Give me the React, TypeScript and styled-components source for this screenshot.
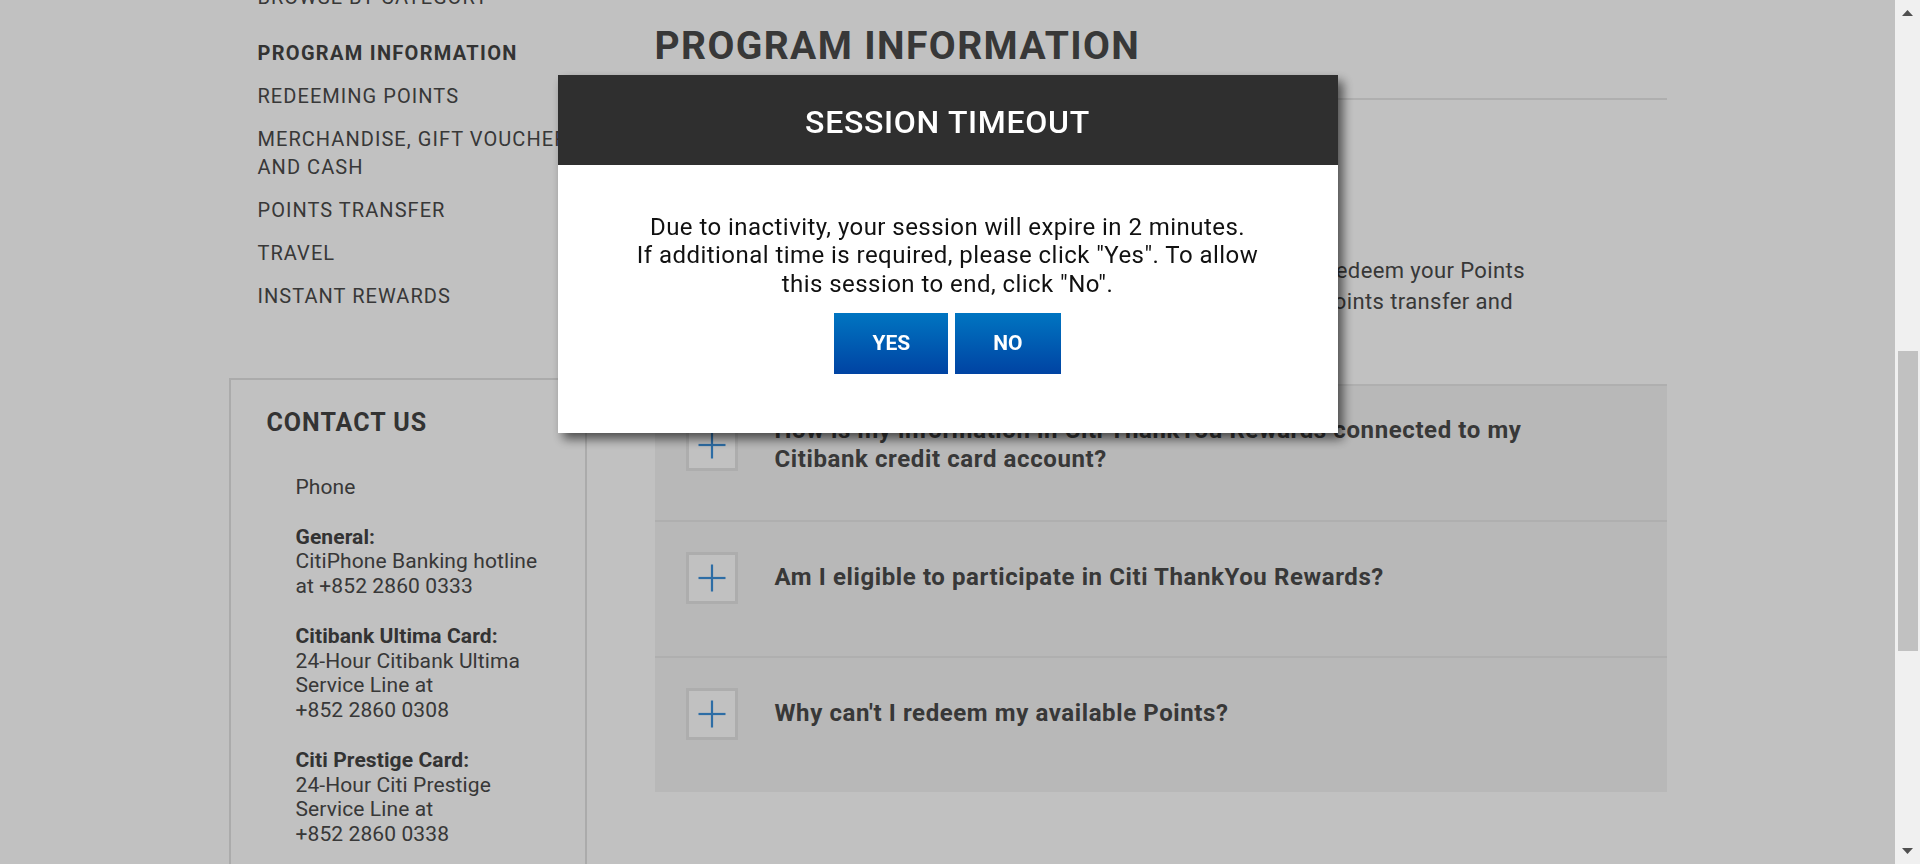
import { useLayoutEffect, useRef } from 'react';
import styled, { createGlobalStyle } from 'styled-components';

const GlobalStyle = createGlobalStyle`
	html, body {
		margin: 0;
		padding: 0;
		overflow: hidden;
	}
	* {
		box-sizing: border-box;
	}
	#root {
		height: 100vh;
	}
`;

const FONT = `Roboto, "Liberation Sans", Arial, sans-serif`;

const navItems = [
	{ label: ['PROGRAM INFORMATION'], active: true },
	{ label: ['REDEEMING POINTS'] },
	{ label: ['MERCHANDISE, GIFT VOUCHERS', 'AND CASH'] },
	{ label: ['POINTS TRANSFER'] },
	{ label: ['TRAVEL'] },
	{ label: ['INSTANT REWARDS'] },
];

const contacts = [
	{ title: 'General:', text: 'CitiPhone Banking hotline at', phone: '+852 2860 0333' },
	{ title: 'Citibank Ultima Card:', text: '24-Hour Citibank Ultima Service Line at', phone: '+852 2860 0308' },
	{ title: 'Citi Prestige Card:', text: '24-Hour Citi Prestige Service Line at', phone: '+852 2860 0338' },
	{ title: 'Citi Premier Card:', text: '24-Hour Citi Premier Service Line at', phone: '+852 2860 0360' },
];

const faqs = [
	'How is my information in Citi ThankYou Rewards connected to my Citibank credit card account?',
	'Am I eligible to participate in Citi ThankYou Rewards?',
	"Why can't I redeem my available Points?",
];

function ToggleIcon({ open }: { open?: boolean }) {
	return (
		<ToggleBox>
			<svg width="28" height="28" viewBox="0 0 28 28">
				<path d="M0.5 14H27.5" stroke="#3c90da" strokeWidth="2.2" />
				{!open && <path d="M14 0.5V27.5" stroke="#3c90da" strokeWidth="2.2" />}
			</svg>
		</ToggleBox>
	);
}

function App() {
	const scrollerRef = useRef<HTMLDivElement>(null);
	const accordionRef = useRef<HTMLDivElement>(null);

	// page is shown scrolled so the accordion top sits at y=98
	useLayoutEffect(() => {
		const scroller = scrollerRef.current;
		const acc = accordionRef.current;
		if (!scroller || !acc) return;
		const offset = acc.getBoundingClientRect().top - scroller.getBoundingClientRect().top + scroller.scrollTop;
		scroller.scrollTop = offset - 98;
	}, []);

	return (
		<>
			<GlobalStyle />
			<Viewport>
				<Frame>
					<Scroller ref={scrollerRef}>
						<Page>
							<Masthead>
								<Logo>citi</Logo>
								<HeroTitle>Citi ThankYou Rewards</HeroTitle>
							</Masthead>
							<Container>
								<Sidebar>
									<NavHeading>BROWSE BY CATEGORY</NavHeading>
									<NavList>
										{navItems.map((item) => (
											<NavItem key={item.label[0]} $active={item.active}>
												{item.label.map((line) => (
													<span key={line}>{line}</span>
												))}
											</NavItem>
										))}
									</NavList>

									<ContactBox>
										<ContactTitle>CONTACT US</ContactTitle>
										<ContactList>
											<ContactEntry>Phone</ContactEntry>
											{contacts.map((c) => (
												<ContactEntry key={c.title}>
													<strong>{c.title}</strong>
													<br />
													{c.text} <Nowrap>{c.phone}</Nowrap>
												</ContactEntry>
											))}
										</ContactList>
									</ContactBox>
								</Sidebar>

								<Main>
									<PageTitle>PROGRAM INFORMATION</PageTitle>
									<Accordion ref={accordionRef}>
										<AccItem $open>
											<AccHeader>
												<ToggleIcon open />
												<Question>What is Citi ThankYou Rewards?</Question>
											</AccHeader>
											<Answer>
												Citi ThankYou Rewards lets you earn Points easily and redeem your Points
												<br />
												for merchandise, gift vouchers, cash, instant rewards, points transfer and
												<br />
												travel.
											</Answer>
										</AccItem>
										{faqs.map((q) => (
											<AccItem key={q}>
												<AccHeader>
													<ToggleIcon />
													<Question>{q}</Question>
												</AccHeader>
											</AccItem>
										))}
									</Accordion>
								</Main>
							</Container>
							<Footer />
						</Page>
					</Scroller>

					<Backdrop>
						<Dialog role="dialog" aria-modal="true">
							<DialogHeader>SESSION TIMEOUT</DialogHeader>
							<DialogBody>
								<Message>
									Due to inactivity, your session will expire in 2 minutes.
									<br />
									If additional time is required, please click "Yes". To allow
									<br />
									this session to end, click "No".
								</Message>
								<ButtonRow>
									<DialogButton>YES</DialogButton>
									<DialogButton>NO</DialogButton>
								</ButtonRow>
							</DialogBody>
						</Dialog>
					</Backdrop>
				</Frame>

				<ScrollTrack>
					<ArrowButton>
						<svg width="25" height="25" viewBox="0 0 25 25">
							<polygon points="7,16 18,16 12.5,10" fill="#505050" />
						</svg>
					</ArrowButton>
					<TrackBody>
						<Thumb $top={326} $height={300} />
					</TrackBody>
					<ArrowButton>
						<svg width="25" height="25" viewBox="0 0 25 25">
							<polygon points="7,9 18,9 12.5,15" fill="#505050" />
						</svg>
					</ArrowButton>
				</ScrollTrack>
			</Viewport>
		</>
	);
}

export default App;

const Viewport = styled.div`
	display: flex;
	width: 100vw;
	height: 100vh;
	overflow: hidden;
	background: #fff;
`;

const Frame = styled.div`
	position: relative;
	flex: 1;
	min-width: 0;
	height: 100%;
`;

const Scroller = styled.div`
	height: 100%;
	overflow-y: auto;
	scrollbar-width: none;
	&::-webkit-scrollbar {
		display: none;
	}
`;

const Page = styled.div`
	font-family: ${FONT};
	color: #4a4a4a;
	background: #fff;
`;

const Masthead = styled.header`
	display: flex;
	flex-direction: column;
	justify-content: space-between;
	height: 380px;
	padding: 24px 228px 48px;
	background: linear-gradient(90deg, #0c2340, #1c4f8c);
	color: #fff;
`;

const Logo = styled.div`
	font-size: 40px;
	font-weight: 700;
`;

const HeroTitle = styled.h2`
	margin: 0;
	font-size: 44px;
	font-weight: 500;
`;

const Container = styled.div`
	width: 1438px;
	margin: 0 auto;
	display: grid;
	grid-template-columns: 358px 1012px;
	column-gap: 68px;
	padding: 40px 0 120px;
`;

const Sidebar = styled.aside`
	display: flex;
	flex-direction: column;
`;

const NavHeading = styled.div`
	padding-left: 29px;
	font-size: 20px;
	line-height: 24px;
	letter-spacing: 1px;
	color: #4a4a4a;
`;

const NavList = styled.ul`
	list-style: none;
	margin: 30px 0 0;
	padding: 0 0 0 29px;
	display: flex;
	flex-direction: column;
	gap: 15px;
`;

const NavItem = styled.li<{ $active?: boolean }>`
	display: flex;
	flex-direction: column;
	font-size: 20px;
	line-height: 28px;
	letter-spacing: ${({ $active }) => ($active ? '1.3px' : '1.05px')};
	font-weight: ${({ $active }) => ($active ? 700 : 400)};
	color: ${({ $active }) => ($active ? '#444' : '#4a4a4a')};
	white-space: nowrap;
`;

const ContactBox = styled.section`
	margin-top: 68px;
	border: 2px solid #e2e2e2;
	padding: 29px 38px 40px 36px;
`;

const ContactTitle = styled.h3`
	margin: 0;
	font-size: 25px;
	line-height: 28px;
	font-weight: 700;
	letter-spacing: 1px;
	color: #444;
`;

const ContactList = styled.div`
	margin-top: 38px;
	padding-left: 29px;
`;

const ContactEntry = styled.p`
	margin: 0 0 24.8px;
	font-size: 21px;
	line-height: 24.8px;
	letter-spacing: 0.1px;
	color: #4a4a4a;

	strong {
		font-weight: 700;
		color: #444;
	}
`;

const Nowrap = styled.span`
	white-space: nowrap;
`;

const Main = styled.main`
	display: flex;
	flex-direction: column;
`;

const PageTitle = styled.h1`
	margin: 38px 0 0;
	font-size: 39px;
	line-height: 46px;
	font-weight: 700;
	letter-spacing: 1.4px;
	color: #4a4a4a;
`;

const Accordion = styled.div`
	margin-top: 29px;
	display: flex;
	flex-direction: column;
`;

const AccItem = styled.div<{ $open?: boolean }>`
	display: flex;
	flex-direction: column;
	min-height: 136px;
	padding: 30px 40px 36px 31px;
	border-top: 2px solid #e7e7e7;
	background: ${({ $open }) => ($open ? '#fff' : '#f3f3f3')};
`;

const AccHeader = styled.div`
	display: flex;
	align-items: center;
	gap: 37px;
`;

const ToggleBox = styled.div`
	flex: none;
	display: flex;
	align-items: center;
	justify-content: center;
	width: 52px;
	height: 52px;
	border: 3px solid #e5e5e5;
	background: #fff;
`;

const Question = styled.h4`
	margin: 0;
	max-width: 790px;
	font-size: 24px;
	line-height: 29.5px;
	font-weight: 700;
	letter-spacing: 0.6px;
	color: #4a4a4a;
`;

const Answer = styled.p`
	margin: 74px 0 0;
	padding-left: 89px;
	font-size: 22px;
	line-height: 30.5px;
	letter-spacing: 0.4px;
	color: #4a4a4a;
	white-space: nowrap;
`;

const Footer = styled.footer`
	height: 600px;
	background: #f3f3f3;
`;

const Backdrop = styled.div`
	position: absolute;
	inset: 0;
	display: flex;
	justify-content: center;
	align-items: flex-start;
	padding-top: 75px;
	background: rgba(0, 0, 0, 0.243);
`;

const Dialog = styled.div`
	width: 780px;
	background: #fff;
	box-shadow: 5px 6px 10px rgba(0, 0, 0, 0.6);
	font-family: ${FONT};
`;

const DialogHeader = styled.h2`
	margin: 0;
	height: 90px;
	padding-top: 4px;
	display: flex;
	align-items: center;
	justify-content: center;
	background: #2f2f2f;
	color: #fff;
	font-size: 32px;
	font-weight: 500;
	letter-spacing: 0.7px;
`;

const DialogBody = styled.div`
	display: flex;
	flex-direction: column;
	align-items: center;
	padding: 48px 40px 59px;
`;

const Message = styled.p`
	margin: 0;
	text-align: center;
	font-size: 24px;
	line-height: 28.3px;
	letter-spacing: 0.45px;
	color: #111;
`;

const ButtonRow = styled.div`
	display: flex;
	gap: 7px;
	margin-top: 15px;
`;

const DialogButton = styled.button`
	height: 61px;
	padding: 0 38px;
	border: none;
	background: linear-gradient(180deg, #0075c1 0%, #0043a3 100%);
	color: #fff;
	font-family: ${FONT};
	font-size: 21px;
	font-weight: 700;
	cursor: pointer;
`;

const ScrollTrack = styled.div`
	flex: none;
	width: 25px;
	height: 100%;
	display: flex;
	flex-direction: column;
	background: #f0f0f0;
`;

const ArrowButton = styled.div`
	flex: none;
	height: 25px;
	display: flex;
`;

const TrackBody = styled.div`
	position: relative;
	flex: 1;
`;

const Thumb = styled.div<{ $top: number; $height: number }>`
	position: absolute;
	left: 3px;
	right: 2px;
	top: ${({ $top }) => $top}px;
	height: ${({ $height }) => $height}px;
	background: #c1c1c1;
`;
